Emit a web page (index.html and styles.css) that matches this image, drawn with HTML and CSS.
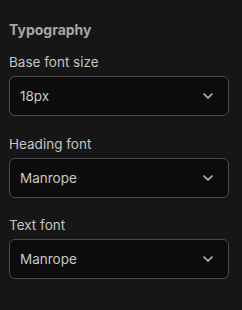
FILE: index.html
```html
<!DOCTYPE html>
<html>
<head>
<meta charset="utf-8">
<link rel="stylesheet" href="styles.css">
</head>
<body>
<div class="panel">
  <h3 class="title">Typography</h3>
  <div class="field">
    <label class="label">Base font size</label>
    <div class="select"><span>18px</span><svg class="chev" width="10" height="6" viewBox="0 0 10 6"><path d="M1 1l4 4 4-4" fill="none" stroke="#c4c4c4" stroke-width="1.5" stroke-linecap="round" stroke-linejoin="round"/></svg></div>
  </div>
  <div class="field">
    <label class="label">Heading font</label>
    <div class="select"><span>Manrope</span><svg class="chev" width="10" height="6" viewBox="0 0 10 6"><path d="M1 1l4 4 4-4" fill="none" stroke="#c4c4c4" stroke-width="1.5" stroke-linecap="round" stroke-linejoin="round"/></svg></div>
  </div>
  <div class="field">
    <label class="label">Text font</label>
    <div class="select"><span>Manrope</span><svg class="chev" width="10" height="6" viewBox="0 0 10 6"><path d="M1 1l4 4 4-4" fill="none" stroke="#c4c4c4" stroke-width="1.5" stroke-linecap="round" stroke-linejoin="round"/></svg></div>
  </div>
</div>
</body>
</html>
```
FILE: styles.css
```css
html, body {
  margin: 0;
  padding: 0;
  background: #161616;
  height: 100%;
}
body {
  font-family: Inter, "Noto Sans", sans-serif;
  color: #c8c8c8;
}
.panel {
  padding: 21px 13px 0 9px;
  display: flex;
  flex-direction: column;
}
.title {
  margin: 0 0 14px 0;
  font-size: 14px;
  line-height: 18px;
  font-weight: 700;
  color: #a6a6a6;
}
.field {
  display: flex;
  flex-direction: column;
  gap: 5px;
  margin-bottom: 18.5px;
}
.label {
  font-size: 13.5px;
  line-height: 18px;
  color: #c4c4c4;
}
.select {
  box-sizing: border-box;
  height: 40px;
  border: 1px solid #4a4a4a;
  border-radius: 6px;
  background: #0c0c0c;
  display: flex;
  align-items: center;
  justify-content: space-between;
  padding: 0 15px 0 10px;
  font-size: 13.5px;
  color: #c8c8c8;
}
.chev {
  display: block;
}
```
